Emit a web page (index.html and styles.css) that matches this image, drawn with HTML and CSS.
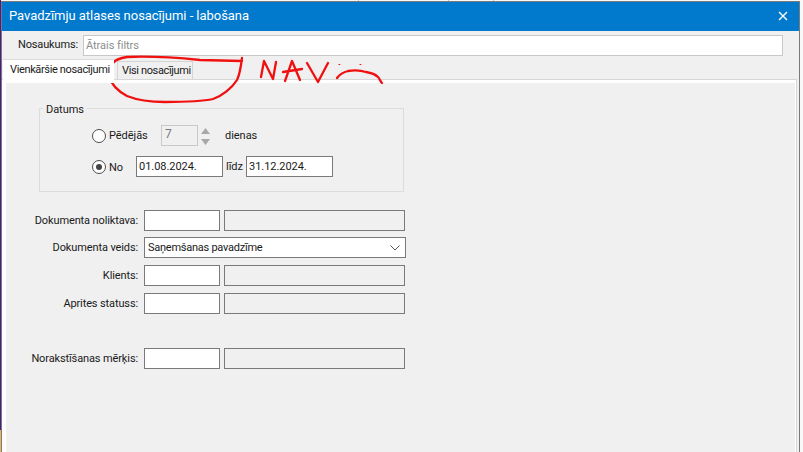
FILE: index.html
```html
<!DOCTYPE html>
<html lang="lv">
<head>
<meta charset="utf-8">
<title>Pavadzīmju atlases nosacījumi - labošana</title>
<link rel="stylesheet" href="styles.css">
</head>
<body>
<div class="window">
  <header class="titlebar">
    <span class="title">Pavadzīmju atlases nosacījumi - labošana</span>
    <svg class="close" width="10" height="10" viewBox="0 0 10 10"><path d="M1 1L9 9M9 1L1 9" stroke="#fff" stroke-width="1.4" fill="none"/></svg>
  </header>
  <div class="namerow">
    <span class="namelabel">Nosaukums:</span>
    <div class="field namefield">Ātrais filtrs</div>
  </div>
  <div class="tabs">
    <div class="tab active">Vienkāršie nosacījumi</div>
    <div class="tab inactive">Visi nosacījumi</div>
  </div>
  <div class="panel">
    <div class="panelinner">
      <fieldset class="group">
        <legend>Datums</legend>
        <div class="grouprow first">
          <span class="radio"></span><span class="radiolabel">Pēdējās</span>
          <div class="spinfield">7</div>
          <div class="spin">
            <svg width="9" height="20" viewBox="0 0 9 20"><path d="M4.5 2L9 8H0Z M0 13H9L4.5 19Z" fill="#a8a8a8"/></svg>
          </div>
          <span class="dienas">dienas</span>
        </div>
        <div class="grouprow">
          <span class="radio on"></span><span class="radiolabel no">No</span>
          <div class="datefield">01.08.2024.</div>
          <span class="lidz">līdz</span>
          <div class="datefield">31.12.2024.</div>
        </div>
      </fieldset>
      <div class="form">
        <div class="row tight"><label class="lbl">Dokumenta noliktava:</label><div class="code"></div><div class="desc"></div></div>
        <div class="row"><label class="lbl">Dokumenta veids:</label>
          <div class="combo"><span>Saņemšanas pavadzīme</span><svg width="10" height="6" viewBox="0 0 10 6"><path d="M0.5 0.5L5 5L9.5 0.5" stroke="#555" fill="none"/></svg></div>
        </div>
        <div class="row"><label class="lbl">Klients:</label><div class="code"></div><div class="desc"></div></div>
        <div class="row"><label class="lbl">Aprites statuss:</label><div class="code"></div><div class="desc"></div></div>
        <div class="row spaced"><label class="lbl">Norakstīšanas mērķis:</label><div class="code"></div><div class="desc"></div></div>
      </div>
    </div>
  </div>
</div>
<svg class="ink" width="803" height="452" viewBox="0 0 803 452" fill="none" stroke="#f01010" stroke-linecap="round" stroke-linejoin="round">
  <path stroke-width="2.3" d="M242 61L200 60C180 58 150 56 127 57C120 58 115 60 113 63C110 68 109 72 110 77C111 83 116 90 127 96C137 100 150 102 165 102C180 102 200 102 213 99C222 96 232 88 237 80C240 74 241 66 242 58"/>
  <path stroke-width="2.3" d="M261 77L264 61L273 79L276 62"/>
  <path stroke-width="2.3" d="M285 81L292 61L300 80M283 72L302 69"/>
  <path stroke-width="2.3" d="M307 63L318 82L328 63"/>
  <path stroke-width="2.3" d="M337 78C340 74 344 72 348 71C354 70 360 70 366 72C372 73 376 75 378 77C380 79 380 81 382 83"/>
  <path stroke-width="1.2" d="M339 64.5h.8M360 64.5h.8"/>
</svg>
</body>
</html>
```

FILE: styles.css
```css
* { box-sizing: border-box; }
html, body { margin: 0; padding: 0; }
body {
  width: 803px;
  height: 452px;
  overflow: hidden;
  background-color: #f8f8f8;
  background-image:
    linear-gradient(#c4c4c4, #c4c4c4),
    linear-gradient(#c4c4c4, #c4c4c4),
    linear-gradient(#c4c4c4, #c4c4c4),
    linear-gradient(#f0b060, #f0b060),
    linear-gradient(#4b1a8c, #4b1a8c);
  background-size: 1px 1px, 1px 1px, 1px 1px, 1px 22px, 1px 2px;
  background-position: 358px 0, 448px 0, 493px 0, 0 430px, 0 9px;
  background-repeat: no-repeat, no-repeat, no-repeat, no-repeat, repeat-y;
  position: relative;
  font-family: Roboto, "Noto Sans", sans-serif;
  font-size: 11px;
  letter-spacing: -0.04px;
  color: #1a1a1a;
}
.window {
  position: absolute;
  left: 1px;
  top: 1px;
  width: 799px;
  height: 451px;
  background: #f0f0f0;
  border: 1px solid #7a7a7a;
  border-bottom: 0;
  display: flex;
  flex-direction: column;
}
.titlebar {
  height: 29px;
  background: #0179cd;
  color: #fff;
  display: flex;
  align-items: center;
  justify-content: space-between;
  padding: 0 11px 2px 7px;
  flex: none;
}
.title { font-size: 13px; letter-spacing: -0.04px; }
.close { display: block; }
.namerow {
  display: flex;
  align-items: flex-start;
  height: 28px;
  padding: 4px 16px 0 16px;
  flex: none;
}
.namelabel { width: 65px; flex: none; line-height: 20px; letter-spacing: -0.15px; }
.field { background: #fff; border: 1px solid #c8c8c8; }
.namefield {
  flex: 1;
  height: 21px;
  line-height: 19px;
  padding-left: 2px;
  color: #8c8c8c;
}
.tabs {
  display: flex;
  align-items: flex-end;
  height: 20px;
  flex: none;
  position: relative;
  z-index: 1;
}
.tab { white-space: nowrap; line-height: 16px; letter-spacing: -0.36px; }
.tab.active {
  width: 111px;
  height: 24px;
  background: #fff;
  padding: 2px 0 0 7px;
  margin-bottom: -4px;
  margin-left: 1px;
  border-top: 1px solid #dadada;
}
.tab.inactive {
  width: 76px;
  height: 18px;
  margin-left: 3px;
  background: #f0f0f0;
  border: 1px solid #d4d4d4;
  border-bottom: 0;
  padding: 1px 0 0 4px;
}
.panel {
  flex: 1;
  margin-right: 2px;
  background: #fff;
  border-top: 1px solid #d6d6d6;
  border-right: 1px solid #d6d6d6;
  padding: 3px 0 0 4px;
  min-height: 0;
}
.panelinner {
  height: 100%;
  background: #f0f0f0;
  margin-right: 1px;
  padding-top: 18px;
}
.group {
  width: 365px;
  height: 91px;
  margin: 0 0 0 33px;
  padding: 0;
  border: 1px solid #dcdcdc;
}
.group legend {
  padding: 0 3px;
  margin-left: 3px;
  line-height: 14px;
  position: relative;
  top: 2px;
}
.grouprow {
  display: flex;
  align-items: center;
  height: 23px;
  padding-left: 52px;
  margin-top: 8px;
}
.grouprow.first { margin-top: 9px; }
.radio {
  width: 14px;
  height: 14px;
  border: 1px solid #4d4d4d;
  border-radius: 50%;
  background: #fff;
  flex: none;
  display: flex;
  align-items: center;
  justify-content: center;
}
.radio.on::after {
  content: "";
  width: 6px;
  height: 6px;
  border-radius: 50%;
  background: #444;
}
.radiolabel { margin-left: 3px; width: 52px; flex: none; }
.radiolabel.no { width: 27px; padding-top: 2px; }
.spinfield {
  width: 37px;
  height: 21px;
  background: #f0f0f0;
  border: 1px solid #c8c8c8;
  padding-left: 3px;
  line-height: 17px;
  color: #7a7a7a;
  font-size: 12px;
}
.spin { width: 9px; margin-left: 3px; height: 20px; }
.spin svg { display: block; }
.dienas { margin-left: 15px; }
.datefield {
  width: 87px;
  height: 21px;
  background: #fff;
  border: 1px solid #7a7a7a;
  padding-left: 2px;
  line-height: 19px;
}
.lidz { width: 23px; text-align: center; flex: none; }
.form { margin-top: 18px; }
.row {
  display: flex;
  align-items: center;
  height: 21px;
  margin-bottom: 7px;
}
.row.tight { margin-bottom: 6px; }
.row.spaced { margin-top: 34px; }
.lbl {
  width: 132px;
  text-align: right;
  flex: none;
  white-space: nowrap;
  margin-right: 6px;
  letter-spacing: -0.12px;
}
.code {
  width: 76px;
  height: 21px;
  background: #fff;
  border: 1px solid #7a7a7a;
  flex: none;
}
.desc {
  width: 181px;
  height: 21px;
  background: #f0f0f0;
  border: 1px solid #7a7a7a;
  margin-left: 4px;
  flex: none;
}
.combo {
  width: 262px;
  height: 21px;
  background: #fff;
  border: 1px solid #7a7a7a;
  display: flex;
  align-items: center;
  justify-content: space-between;
  padding: 0 5px 0 3px;
  flex: none;
  letter-spacing: -0.25px;
}
.ink { position: absolute; left: 0; top: 0; pointer-events: none; }
```
